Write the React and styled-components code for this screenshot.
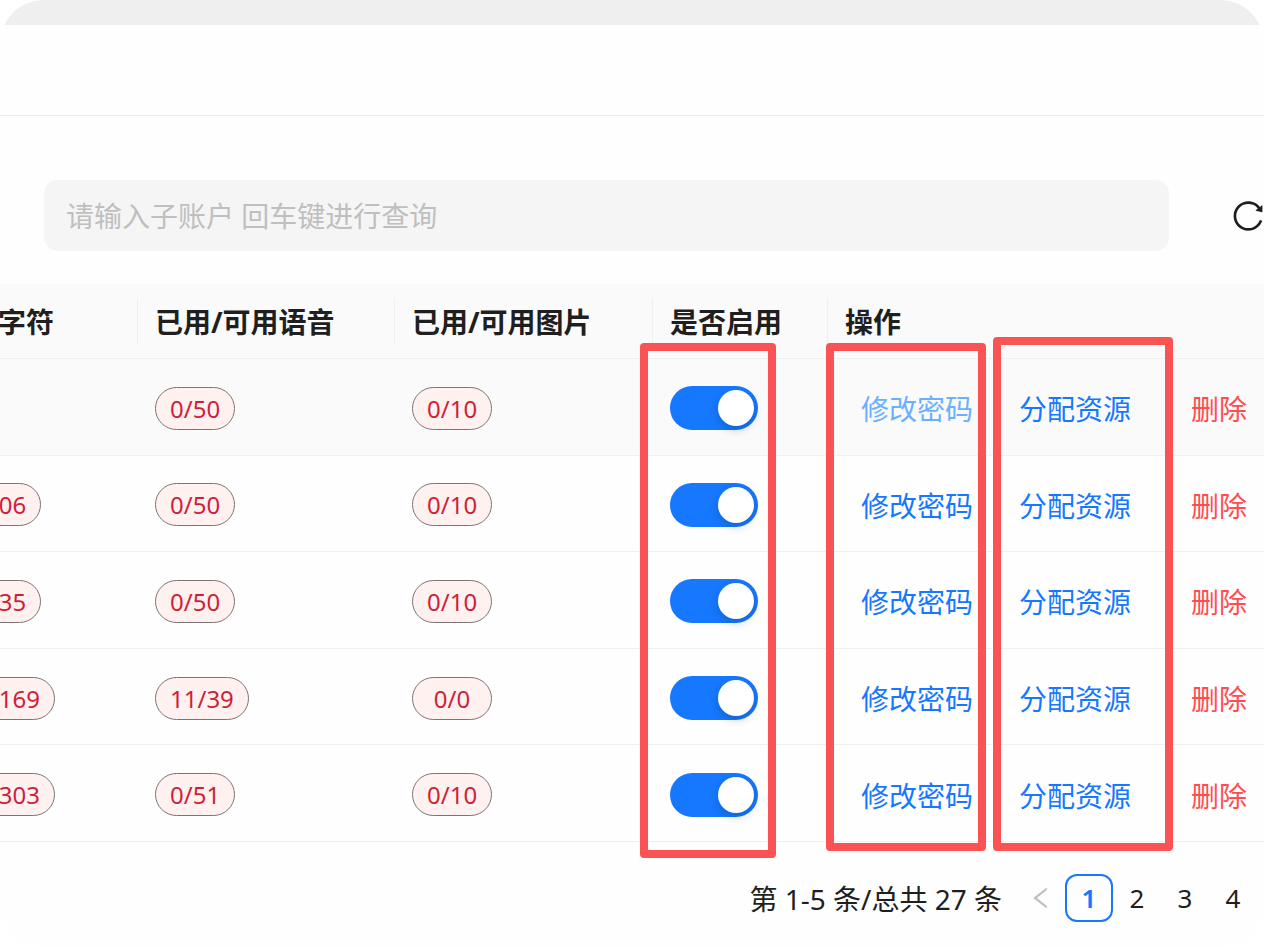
import React, { useState } from 'react';
import styled, { createGlobalStyle } from 'styled-components';
import { AiOutlineReload, AiOutlineLeft } from 'react-icons/ai';

const accounts = [
    { id: 1, chars: '', voice: '0/50', image: '0/10', resetting: true },
    { id: 2, chars: '006', voice: '0/50', image: '0/10' },
    { id: 3, chars: '235', voice: '0/50', image: '0/10' },
    { id: 4, chars: '3169', voice: '11/39', image: '0/0' },
    { id: 5, chars: '4303', voice: '0/51', image: '0/10' },
];

const Row = ({ account }) => {
    const [enabled, setEnabled] = useState(true);

    return (
        <BodyRow $hover={account.resetting}>
            <Cell>{account.chars && <Tag>{account.chars}</Tag>}</Cell>
            <Cell><Tag $minWidth={80}>{account.voice}</Tag></Cell>
            <Cell><Tag $minWidth={80}>{account.image}</Tag></Cell>
            <Cell>
                <Switch
                    type="checkbox"
                    role="switch"
                    aria-label="是否启用"
                    checked={enabled}
                    onChange={(e) => setEnabled(e.target.checked)}
                />
            </Cell>
            <Cell>
                <Actions>
                    <ActionButton type="button" $color={account.resetting ? '#69b1ff' : '#1677ff'}>修改密码</ActionButton>
                    <ActionButton type="button" $color="#1677ff">分配资源</ActionButton>
                    <DeleteButton type="button" $color="#ff4d4f">删除</DeleteButton>
                </Actions>
            </Cell>
        </BodyRow>
    );
};

const App = () => {
    const [page, setPage] = useState(1);

    return (
        <Page>
            <GlobalStyle />
            <TopStrip />
            <Header />
            <Toolbar>
                <Search type="text" aria-label="查询子账户" placeholder="请输入子账户 回车键进行查询" />
                <ReloadButton type="button" aria-label="刷新">
                    <AiOutlineReload size={36} />
                </ReloadButton>
            </Toolbar>
            <TableArea>
                <Table>
                    <colgroup>
                        <Col $width={185} />
                        <Col $width={257} />
                        <Col $width={258} />
                        <Col $width={175} />
                        <col />
                    </colgroup>
                    <thead>
                        <tr>
                            <HeadCell>用字符</HeadCell>
                            <HeadCell>已用/可用语音</HeadCell>
                            <HeadCell>已用/可用图片</HeadCell>
                            <HeadCell>是否启用</HeadCell>
                            <HeadCell>操作</HeadCell>
                        </tr>
                    </thead>
                    <tbody>
                        {accounts.map((account) => <Row key={account.id} account={account} />)}
                    </tbody>
                </Table>
                <Mark $left={640} $top={59} $width={136} $height={515} />
                <Mark $left={826} $top={59} $width={160} $height={508} />
                <Mark $left={993} $top={53} $width={180} $height={514} />
            </TableArea>
            <Pagination aria-label="分页">
                <Total>第 1-5 条/总共 27 条</Total>
                <PageButton type="button" aria-label="上一页" disabled>
                    <AiOutlineLeft size={28} />
                </PageButton>
                {[1, 2, 3, 4].map((n) => (
                    <PageButton key={n} type="button" $active={n === page} onClick={() => setPage(n)}>
                        {n}
                    </PageButton>
                ))}
            </Pagination>
        </Page>
    );
};

const GlobalStyle = createGlobalStyle`
    * {
        box-sizing: border-box;
    }
    body {
        margin: 0;
        background: #ffffff;
        color: #1f1f1f;
        font-family: "Noto Sans", "Noto Sans CJK SC", sans-serif;
        font-size: 28px;
    }
    button, input {
        font: inherit;
    }
`;

const Page = styled.div`
    min-height: 100vh;
    background: #fefefe;
    border-radius: 44px;
    overflow: hidden;
`;

const TopStrip = styled.div`
    height: 25px;
    background: #efefef;
`;

const Header = styled.header`
    height: 91px;
    border-bottom: 1px solid #ebebeb;
`;

const Toolbar = styled.div`
    display: flex;
    align-items: center;
    gap: 61px;
    padding: 64px 0 33px 44px;
`;

const Search = styled.input`
    flex: 1;
    min-width: 0;
    height: 71px;
    padding: 0 22px;
    border: 0;
    border-radius: 14px;
    background: #f5f5f5;
    outline: none;

    &::placeholder {
        color: #bfbfbf;
        opacity: 1;
    }
`;

const ReloadButton = styled.button`
    display: flex;
    flex: 0 0 34px;
    min-width: 0;
    padding: 0;
    border: 0;
    background: none;
    color: #1f1f1f;
    cursor: pointer;

    svg {
        flex-shrink: 0;
    }
`;

const TableArea = styled.div`
    position: relative;
`;

// the table is scrolled a little to the right inside its area
const Table = styled.table`
    width: calc(100% + 47px);
    height: 558px;
    margin-left: -47px;
    table-layout: fixed;
    border-collapse: separate;
    border-spacing: 0;
`;

const Col = styled.col`
    width: ${(props) => props.$width}px;
`;

const HeadCell = styled.th`
    height: 75px;
    padding: 0 0 0 17px;
    border-bottom: 1px solid #f0f0f0;
    background: linear-gradient(#f0f0f0, #f0f0f0) right center / 1px 46px no-repeat #fafafa;
    font-weight: 700;
    text-align: left;
    white-space: nowrap;

    &:last-child {
        background: #fafafa;
    }
`;

const BodyRow = styled.tr`
    background: ${(props) => (props.$hover ? '#fafafa' : 'transparent')};
`;

const Cell = styled.td`
    padding: 3px 0 0 17px;
    border-bottom: 1px solid #f0f0f0;
    vertical-align: middle;
`;

const Tag = styled.span`
    display: flex;
    justify-content: center;
    align-items: center;
    width: fit-content;
    min-width: ${(props) => props.$minWidth || 0}px;
    height: 43px;
    padding: 0 14px;
    border: 1px solid #7d7575;
    border-radius: 22px;
    background: #fff1f0;
    color: #cf1f38;
    font-size: 24px;
`;

const Switch = styled.input`
    display: flex;
    align-items: center;
    appearance: none;
    width: 88px;
    height: 44px;
    margin: 0;
    padding: 4px;
    border-radius: 22px;
    background: #bfbfbf;
    cursor: pointer;

    &::before {
        content: "";
        width: 36px;
        height: 36px;
        border-radius: 50%;
        background: #ffffff;
        box-shadow: 0 4px 8px rgba(0, 35, 11, 0.2);
    }

    &:checked {
        justify-content: flex-end;
        background: #1677ff;
    }
`;

const Actions = styled.div`
    display: flex;
    gap: 14px;
`;

const ActionButton = styled.button`
    flex-shrink: 0;
    padding: 0 16px;
    border: 0;
    background: none;
    color: ${(props) => props.$color};
    white-space: nowrap;
    cursor: pointer;
`;

const DeleteButton = styled(ActionButton)`
    margin-left: 14px;
`;

const Mark = styled.div`
    position: absolute;
    left: ${(props) => props.$left}px;
    top: ${(props) => props.$top}px;
    width: ${(props) => props.$width}px;
    height: ${(props) => props.$height}px;
    border: 8px solid #fb5253;
    border-radius: 4px;
    pointer-events: none;
`;

const Pagination = styled.nav`
    display: flex;
    justify-content: flex-end;
    align-items: center;
    padding: 32px 7px 26px;
`;

const Total = styled.span`
    margin-right: 15px;
    white-space: nowrap;
`;

const PageButton = styled.button`
    display: flex;
    justify-content: center;
    align-items: center;
    width: 48px;
    height: 48px;
    padding: 0;
    border: ${(props) => (props.$active ? '2px solid #1677ff' : '0')};
    border-radius: 12px;
    background: none;
    color: ${(props) => (props.$active ? '#1677ff' : '#1f1f1f')};
    font-size: 26px;
    font-weight: ${(props) => (props.$active ? 600 : 400)};
    cursor: pointer;

    &:disabled {
        color: #bfbfbf;
        cursor: default;
    }
`;

export default App;
